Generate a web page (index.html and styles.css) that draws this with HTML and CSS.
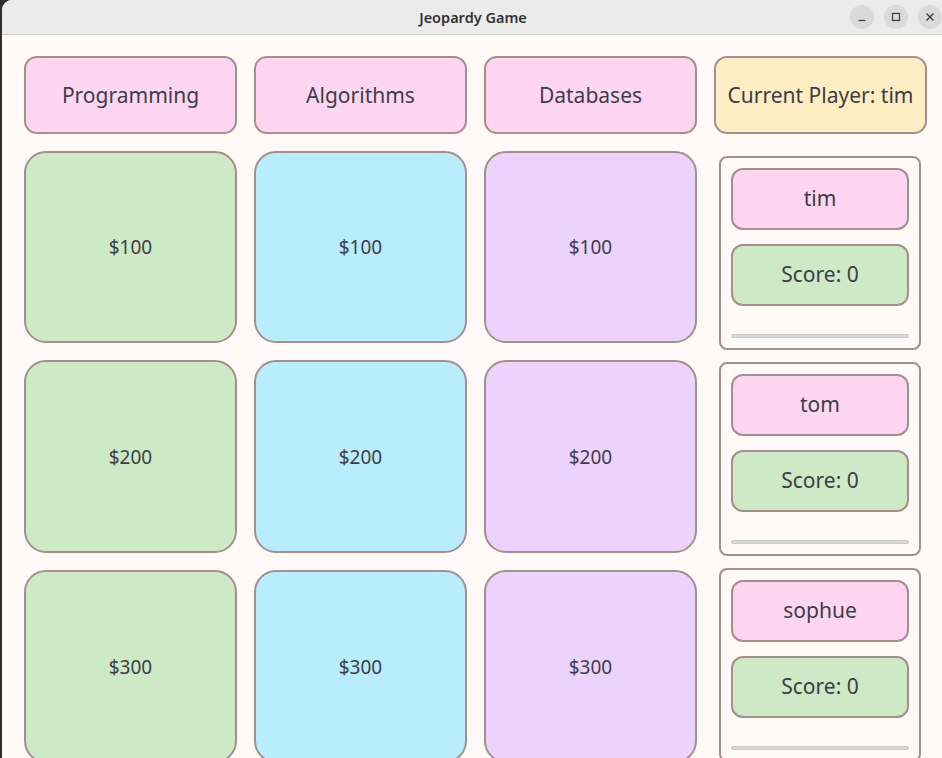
FILE: index.html
```html
<!DOCTYPE html>
<html>
<head>
<meta charset="utf-8">
<title>Jeopardy Game</title>
<link rel="stylesheet" href="styles.css">
</head>
<body>
<div class="window">
  <div class="titlebar">
    <span class="title">Jeopardy Game</span>
    <div class="controls">
      <span class="ctl"><svg width="10" height="10" viewBox="0 0 10 10"><path d="M1.5 8.5h7" stroke="#3a3a3a" stroke-width="1.2" fill="none"/></svg></span>
      <span class="ctl"><svg width="10" height="10" viewBox="0 0 10 10"><rect x="1.5" y="1.5" width="7" height="7" stroke="#3a3a3a" stroke-width="1.2" fill="none"/></svg></span>
      <span class="ctl"><svg width="10" height="10" viewBox="0 0 10 10"><path d="M1.5 1.5l7 7M8.5 1.5l-7 7" stroke="#3a3a3a" stroke-width="1.3" fill="none"/></svg></span>
    </div>
  </div>
  <div class="content">
    <div class="board">
      <div class="head cat">Programming</div>
      <div class="head cat">Algorithms</div>
      <div class="head cat">Databases</div>
      <div class="head current">Current Player: tim</div>

      <div class="card green">$100</div>
      <div class="card blue">$100</div>
      <div class="card purple">$100</div>

      <div class="players">
        <div class="panel">
          <div class="pbox name">tim</div>
          <div class="pbox score">Score: 0</div>
          <div class="bar"></div>
        </div>
        <div class="panel">
          <div class="pbox name">tom</div>
          <div class="pbox score">Score: 0</div>
          <div class="bar"></div>
        </div>
        <div class="panel">
          <div class="pbox name">sophue</div>
          <div class="pbox score">Score: 0</div>
          <div class="bar"></div>
        </div>
      </div>

      <div class="card green">$200</div>
      <div class="card blue">$200</div>
      <div class="card purple">$200</div>

      <div class="card green">$300</div>
      <div class="card blue">$300</div>
      <div class="card purple">$300</div>
    </div>
  </div>
</div>
</body>
</html>
```

FILE: styles.css
```css
html, body {
  margin: 0;
  padding: 0;
  width: 942px;
  height: 758px;
  overflow: hidden;
  background: #2e2e2e;
}

.window {
  margin-left: 2px;
  height: 758px;
  background: #fff9f7;
  border-top-left-radius: 10px;
  overflow: hidden;
  font-family: "Noto Sans", "Open Sans", sans-serif;
  color: #3d3d48;
}

.titlebar {
  height: 34px;
  background: #ebebeb;
  border-bottom: 1px solid #cfcfcf;
  display: flex;
  align-items: center;
  justify-content: center;
  position: relative;
}

.title {
  font-family: "Noto Sans", sans-serif;
  font-weight: 600;
  font-size: 14.5px;
  color: #333;
  margin-left: 2px;
}

.controls {
  position: absolute;
  right: 0;
  top: 5px;
  display: flex;
  gap: 10px;
}

.ctl {
  width: 24px;
  height: 24px;
  border-radius: 50%;
  background: #dadada;
  display: flex;
  align-items: center;
  justify-content: center;
}

.content {
  padding: 21px 0 0 22px;
}

.board {
  display: grid;
  grid-template-columns: 213px 213px 213px 213px;
  grid-template-rows: 78px 192px 193px 193px;
  column-gap: 17px;
  row-gap: 17px;
}

.head {
  height: 78px;
  box-sizing: border-box;
  border: 2px solid #a58f8c;
  border-radius: 13px;
  display: flex;
  align-items: center;
  justify-content: center;
  font-size: 21px;
  padding-bottom: 1px;
}

.cat { background: #ffd6f2; }
.current { background: #ffedc3; }

.card {
  box-sizing: border-box;
  border: 2px solid #a58f8c;
  border-radius: 22px;
  display: flex;
  align-items: center;
  justify-content: center;
  font-size: 19px;
}

.green { background: #cde9c6; }
.blue { background: #b9ecfc; }
.purple { background: #ecd3fe; }

.players {
  grid-column: 4;
  grid-row: 2 / span 3;
  display: flex;
  flex-direction: column;
  gap: 12px;
  padding: 5px 6px 0 5px;
}

.panel {
  flex: none;
  height: 194px;
  box-sizing: border-box;
  border: 2px solid #a58f8c;
  border-radius: 8px;
  padding: 10px 10px 0 10px;
  display: flex;
  flex-direction: column;
}

.pbox {
  height: 62px;
  box-sizing: border-box;
  border: 2px solid #a58f8c;
  border-radius: 12px;
  display: flex;
  align-items: center;
  justify-content: center;
  font-size: 21px;
  padding-bottom: 2px;
}

.name { background: #ffd6f2; }
.score { background: #cde9c6; margin-top: 14px; }

.bar {
  margin-top: 28px;
  height: 4px;
  box-sizing: border-box;
  background: #d8d8d8;
  border: 1px solid #cacaca;
  border-radius: 2px;
}
```
